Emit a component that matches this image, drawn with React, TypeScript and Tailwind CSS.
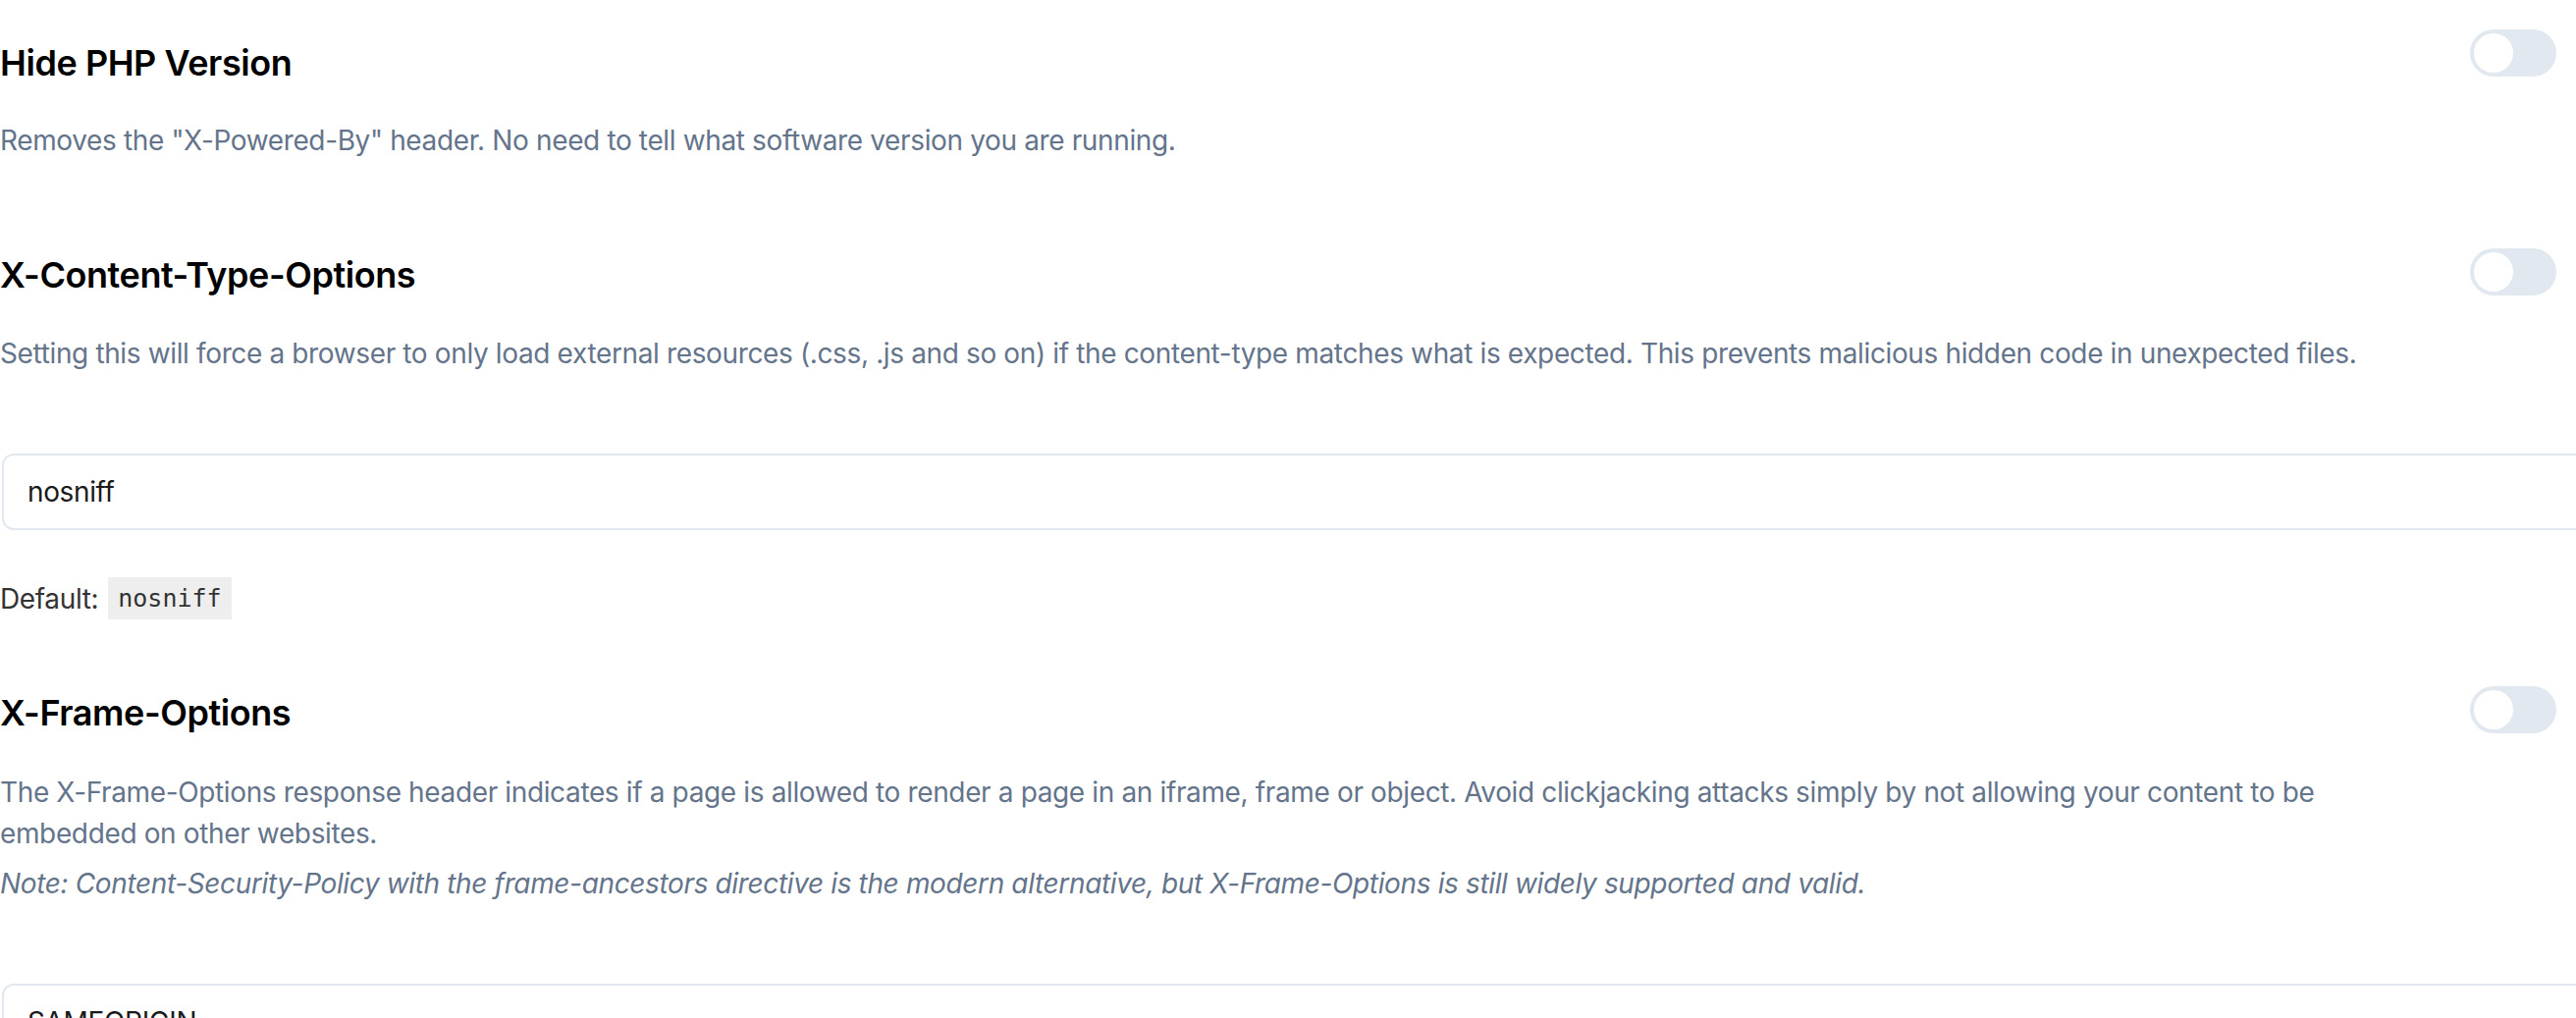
import React from "react";

function Toggle({ className = "" }: { className?: string }) {
  return (
    <div className={"relative h-[48px] w-[88px] shrink-0 rounded-full bg-[#e2e8f0] " + className}>
      <div className="absolute left-[4px] top-[4px] h-[40px] w-[40px] rounded-full bg-white" />
    </div>
  );
}

function Heading({ children }: { children: React.ReactNode }) {
  return (
    <h2 className="text-[36px] font-semibold leading-[56px] text-black tracking-[-0.012em]">{children}</h2>
  );
}

function Desc({ children, className = "" }: { children: React.ReactNode; className?: string }) {
  return (
    <p className={"max-w-[2440px] text-[28px] leading-[42px] tracking-[-0.013em] text-[#64748b] " + className}>
      {children}
    </p>
  );
}

function Field({ value, className = "" }: { value: string; className?: string }) {
  return (
    <div
      className={
        "ml-[2px] w-[2680px] rounded-[12px] border-2 border-[#e2e8f0] bg-white px-[24px] py-[16px] text-[28px] leading-[42px] tracking-[-0.013em] text-[#1a1a1a] " +
        className
      }
    >
      {value}
    </div>
  );
}

export default function App() {
  return (
    <div
      className="h-[1037px] w-full overflow-hidden bg-white"
      style={{ fontFamily: "Inter, 'Noto Sans', sans-serif" }}
    >
      <div className="pr-[20px]">
        {/* Section 1 */}
        <section className="pt-[30px]">
          <div className="flex items-start justify-between">
            <div className="mt-[6px]">
              <Heading>Hide PHP Version</Heading>
            </div>
            <Toggle />
          </div>
          <Desc className="mt-[30px]">
            Removes the "X-Powered-By" header. No need to tell what software version you are running.
          </Desc>
        </section>

        {/* Section 2 */}
        <section className="mt-[88px]">
          <div className="flex items-start justify-between">
            <Heading>X-Content-Type-Options</Heading>
            <Toggle className="mt-[1px]" />
          </div>
          <Desc className="mt-[31px]">
            Setting this will force a browser to only load external resources (.css, .js and so on) if the
            content-type matches what is expected. This prevents malicious hidden code in unexpected files.
          </Desc>
          <Field value="nosniff" className="mt-[81px]" />
          <div className="mt-[48px] flex items-center text-[28px] leading-[42px] tracking-[-0.013em] text-[#333333]">
            <span>Default:</span>
            <code
              className="ml-[10px] inline-block h-[43px] bg-[#eeeeee] px-[10px] text-[25px] leading-[43px] tracking-normal text-[#333333]"
              style={{ fontFamily: "'DejaVu Sans Mono', monospace" }}
            >
              nosniff
            </code>
          </div>
        </section>

        {/* Section 3 */}
        <section className="mt-[67px]">
          <div className="flex items-start justify-between">
            <Heading>X-Frame-Options</Heading>
            <Toggle className="mt-[1px]" />
          </div>
          <Desc className="mt-[32px]">
            The X-Frame-Options response header indicates if a page is allowed to render a page in an iframe,
            frame or object. Avoid clickjacking attacks simply by not allowing your content to be embedded on
            other websites.
          </Desc>
          <Desc className="mt-[9px] italic">
            Note: Content-Security-Policy with the frame-ancestors directive is the modern alternative, but
            X-Frame-Options is still widely supported and valid.
          </Desc>
          <Field value="SAMEORIGIN" className="mt-[81px]" />
        </section>
      </div>
    </div>
  );
}
